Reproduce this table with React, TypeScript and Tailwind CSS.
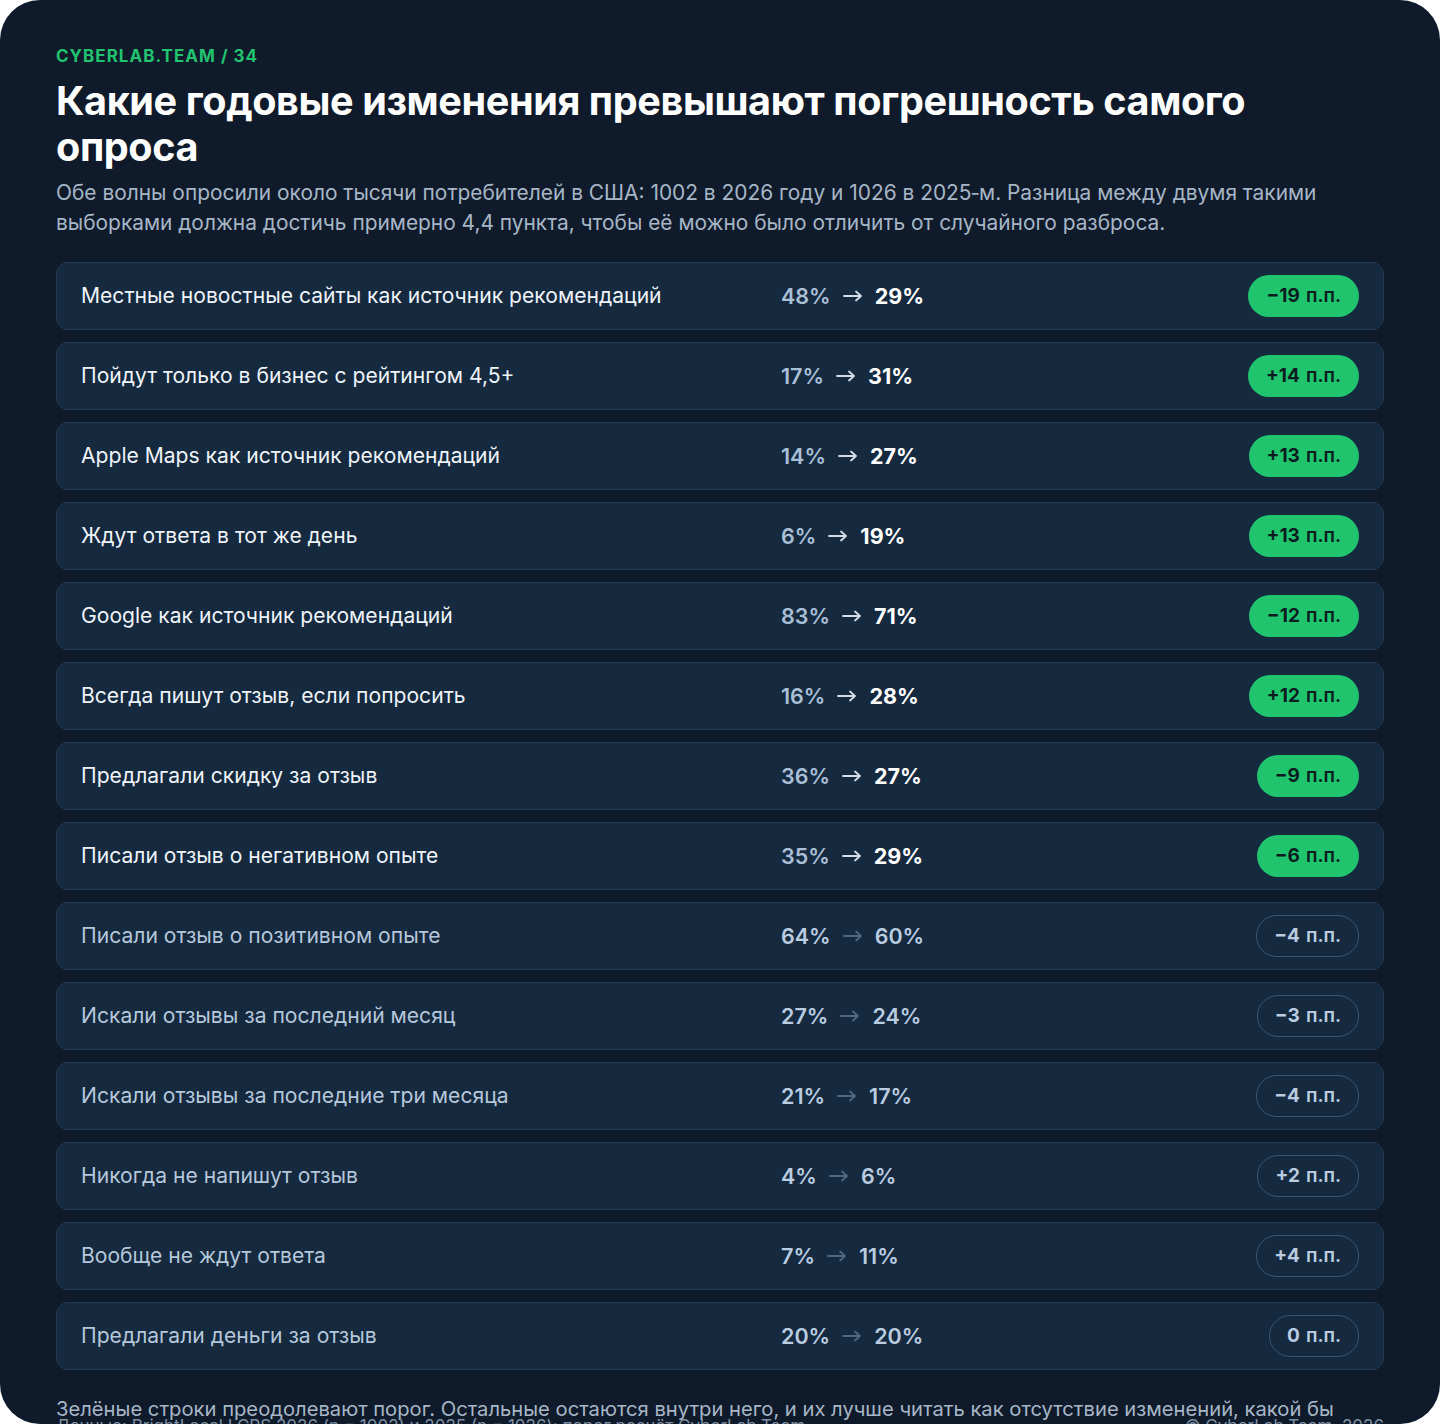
const rows = [
  { label: "Местные новостные сайты как источник рекомендаций", from: "48%", to: "29%", delta: "−19", sig: true },
  { label: "Пойдут только в бизнес с рейтингом 4,5+", from: "17%", to: "31%", delta: "+14", sig: true },
  { label: "Apple Maps как источник рекомендаций", from: "14%", to: "27%", delta: "+13", sig: true },
  { label: "Ждут ответа в тот же день", from: "6%", to: "19%", delta: "+13", sig: true },
  { label: "Google как источник рекомендаций", from: "83%", to: "71%", delta: "−12", sig: true },
  { label: "Всегда пишут отзыв, если попросить", from: "16%", to: "28%", delta: "+12", sig: true },
  { label: "Предлагали скидку за отзыв", from: "36%", to: "27%", delta: "−9", sig: true },
  { label: "Писали отзыв о негативном опыте", from: "35%", to: "29%", delta: "−6", sig: true },
  { label: "Писали отзыв о позитивном опыте", from: "64%", to: "60%", delta: "−4", sig: false },
  { label: "Искали отзывы за последний месяц", from: "27%", to: "24%", delta: "−3", sig: false },
  { label: "Искали отзывы за последние три месяца", from: "21%", to: "17%", delta: "−4", sig: false },
  { label: "Никогда не напишут отзыв", from: "4%", to: "6%", delta: "+2", sig: false },
  { label: "Вообще не ждут ответа", from: "7%", to: "11%", delta: "+4", sig: false },
  { label: "Предлагали деньги за отзыв", from: "20%", to: "20%", delta: "0", sig: false },
];

function Arrow({ dim }: { dim: boolean }) {
  return (
    <svg width="20" height="12" viewBox="0 0 20 12" fill="none" className={dim ? "text-[#4f6882]" : "text-[#d3dde8]"}>
      <path d="M1 6h17M13 1.5L18 6l-5 4.5" stroke="currentColor" strokeWidth="1.8" strokeLinecap="round" strokeLinejoin="round" />
    </svg>
  );
}

export default function App() {
  return (
    <div className="w-[1440px] h-[1424px] bg-white font-['Inter','Noto_Sans',sans-serif]">
      <div className="h-[1424px] overflow-hidden rounded-[40px] bg-[#0f1b2b] px-14 pt-[44px]">
        {/* ── HEADER ── */}
        <p className="text-[17px] font-bold tracking-[0.06em] text-[#22c36f] leading-6">
          CYBERLAB.TEAM / 34
        </p>
        <h1 className="mt-[10px] text-[39.6px] font-bold leading-[46px] tracking-[-0.01em] text-white pr-[120px]">
          Какие годовые изменения превышают погрешность самого опроса
        </h1>
        <p className="mt-[8px] text-[20.9px] leading-[30px] text-[#a7b6c6]">
          Обе волны опросили около тысячи потребителей в США: 1002 в 2026 году и 1026 в 2025‑м. Разница между двумя такими
          выборками должна достичь примерно 4,4 пункта, чтобы её можно было отличить от случайного разброса.
        </p>

        {/* ── ROWS ── */}
        <div className="mt-[24px] flex flex-col gap-3">
          {rows.map((r, i) => (
            <div
              key={i}
              className="grid h-[68px] grid-cols-[700px_1fr_auto] items-center rounded-xl border border-[#243a54] bg-[#15293f] px-6"
            >
              <span className={"text-[21.1px] " + (r.sig ? "text-[#eef3f8]" : "text-[#b5c7da]")}>
                {r.label}
              </span>
              <div className="flex items-center gap-3 text-[21.5px] font-semibold">
                <span className={r.sig ? "text-[#a9bfd6]" : "text-[#b9cce0]"}>{r.from}</span>
                <Arrow dim={!r.sig} />
                <span className={r.sig ? "font-bold text-white" : "text-[#b9cce0]"}>{r.to}</span>
              </div>
              {r.sig ? (
                <span className="flex h-[42px] items-center rounded-full bg-[#1fc46c] px-[18px] text-[19px] font-bold text-[#0c1d22]">
                  {r.delta}
                  <span className="ml-[6px] font-semibold">п.п.</span>
                </span>
              ) : (
                <span className="flex h-[42px] items-center rounded-full border border-[#3b5572] px-[17px] text-[19px] font-bold text-[#b9cce0]">
                  {r.delta}
                  <span className="ml-[6px] font-semibold">п.п.</span>
                </span>
              )}
            </div>
          ))}
        </div>

        {/* ── FOOTER ── */}
        <div className="mt-[26px] h-[20px]">
          <p className="max-w-[1285px] text-[20.2px] leading-[26px] text-[#a7b6c6]">
            Зелёные строки преодолевают порог. Остальные остаются внутри него, и их лучше читать как отсутствие изменений, какой бы
            ни была их величина.
          </p>
        </div>
        <div className="flex justify-between text-[17px] leading-5 text-[#7f90a3]">
          <span>Данные: BrightLocal LCRS 2026 (n = 1002) и 2025 (n = 1026); порог расчёт CyberLab.Team</span>
          <span>© CyberLab.Team, 2026</span>
        </div>
      </div>
    </div>
  );
}
